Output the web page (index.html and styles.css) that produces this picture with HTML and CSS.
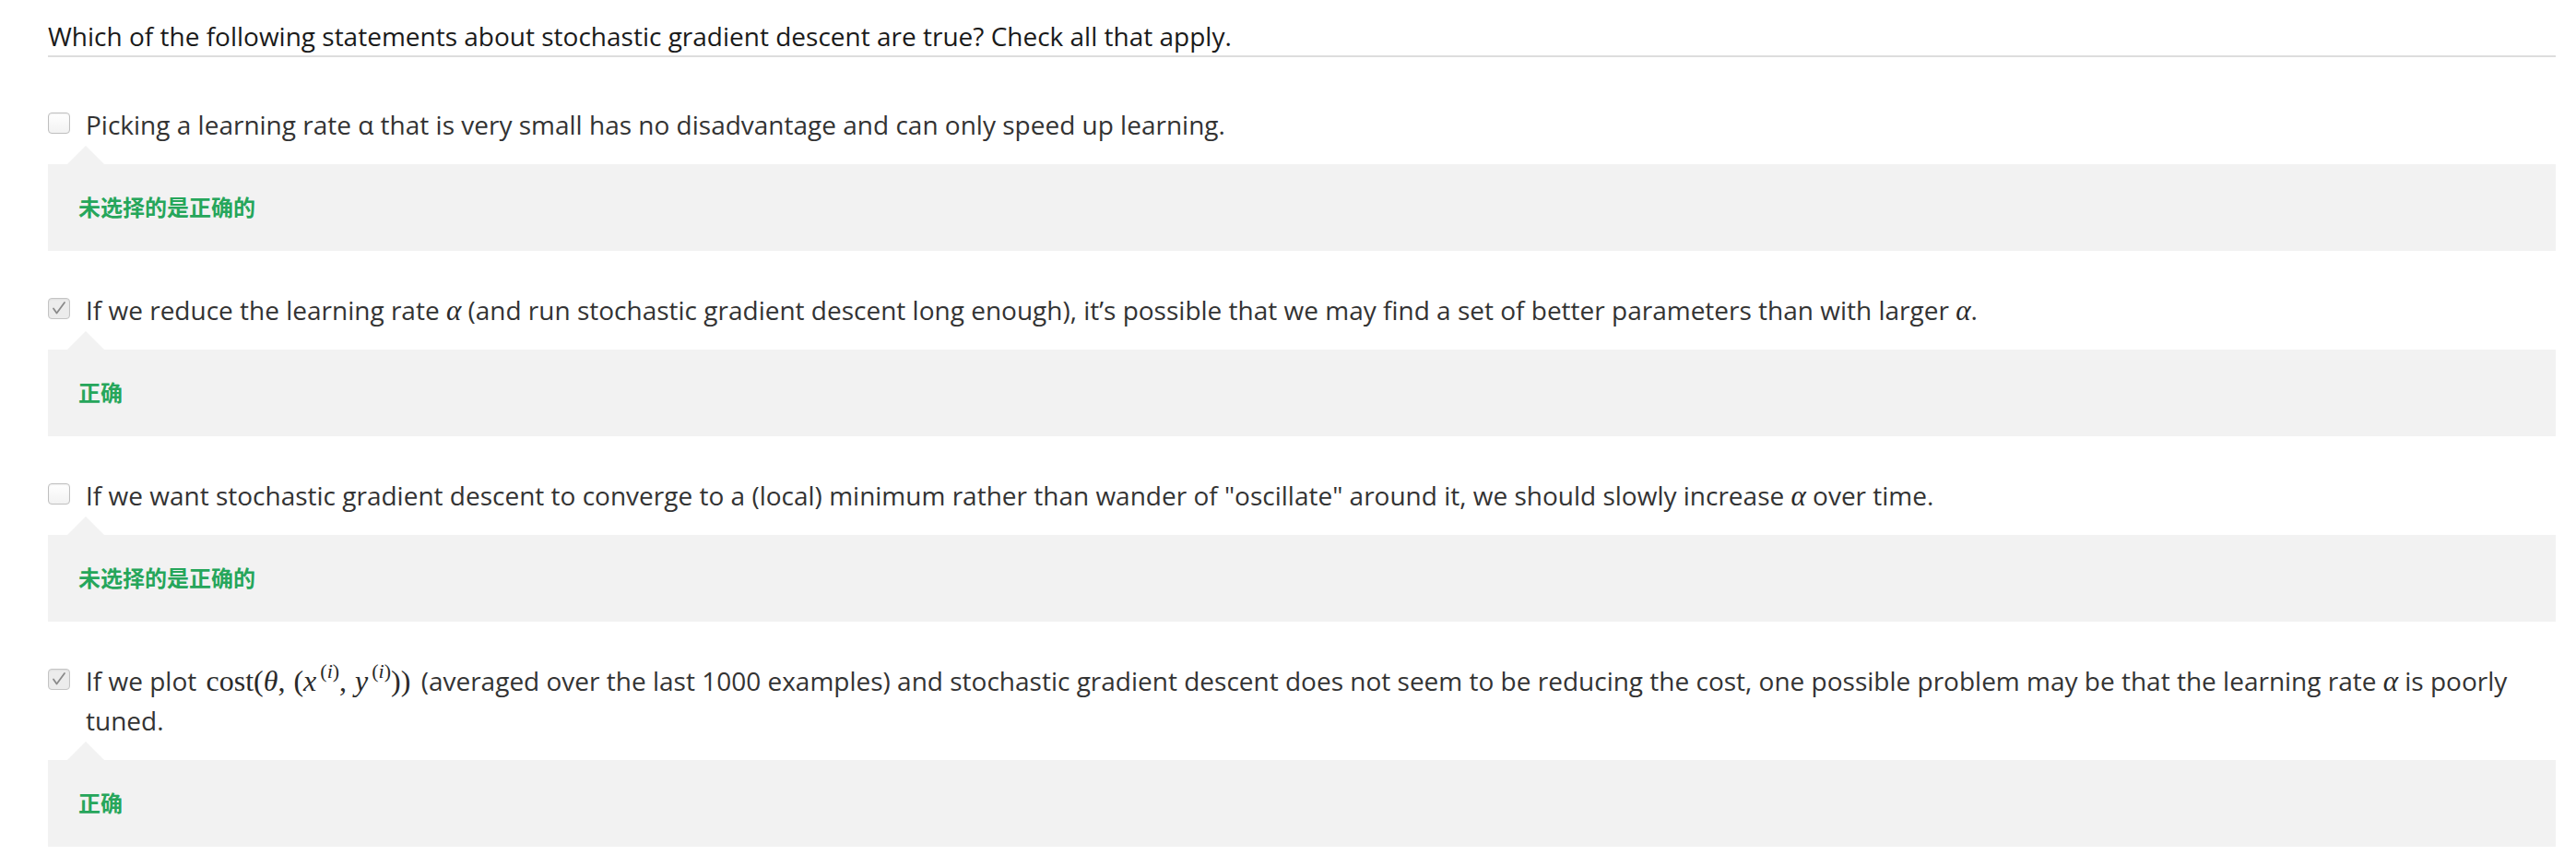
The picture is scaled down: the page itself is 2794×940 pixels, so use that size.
FILE: index.html
```html
<!DOCTYPE html>
<html lang="en">
<head>
<meta charset="utf-8">
<title>Quiz</title>
<link rel="stylesheet" href="styles.css">
</head>
<body>
<div class="quiz">
  <div class="question">Which of the following statements about stochastic gradient descent are true? Check all that apply.</div>
  <div class="options">
    <div class="option">
      <div class="choice">
        <span class="box"></span>
        <div class="text">Picking a learning rate α that is very small has no disadvantage and can only speed up learning.</div>
      </div>
      <div class="feedback"><span class="verdict">未选择的是正确的</span></div>
    </div>
    <div class="option">
      <div class="choice">
        <span class="box checked"><svg viewBox="0 0 24 23" width="24" height="23"><path d="M6 11.5 L9.5 16.5 L18 5" fill="none" stroke="#8a8a8a" stroke-width="1.8" stroke-linecap="round" stroke-linejoin="round"/></svg></span>
        <div class="text">If we reduce the learning rate <span class="math"><i>α</i></span> (and run stochastic gradient descent long enough), it’s possible that we may find a set of better parameters than with larger <span class="math"><i>α</i></span>.</div>
      </div>
      <div class="feedback"><span class="verdict">正确</span></div>
    </div>
    <div class="option">
      <div class="choice">
        <span class="box"></span>
        <div class="text">If we want stochastic gradient descent to converge to a (local) minimum rather than wander of "oscillate" around it, we should slowly increase <span class="math"><i>α</i></span> over time.</div>
      </div>
      <div class="feedback"><span class="verdict">未选择的是正确的</span></div>
    </div>
    <div class="option">
      <div class="choice">
        <span class="box checked"><svg viewBox="0 0 24 23" width="24" height="23"><path d="M6 11.5 L9.5 16.5 L18 5" fill="none" stroke="#8a8a8a" stroke-width="1.8" stroke-linecap="round" stroke-linejoin="round"/></svg></span>
        <div class="text">If we plot <span class="math formula">cost(<i>θ</i><span class="comma">,</span>(<i>x</i><sup>(<i>i</i>)</sup><span class="comma">,</span><i>y</i><sup>(<i>i</i>)</sup>))</span> (averaged over the last 1000 examples) and stochastic gradient descent does not seem to be reducing the cost, one possible problem may be that the learning rate <span class="math"><i>α</i></span> is poorly tuned.</div>
      </div>
      <div class="feedback"><span class="verdict">正确</span></div>
    </div>
  </div>
</div>
</body>
</html>
```

FILE: styles.css
```css
html, body {
  margin: 0;
  padding: 0;
  background: #ffffff;
}

body {
  font-family: "Open Sans", "Noto Sans CJK SC", sans-serif;
  color: #333333;
}

.quiz {
  padding: 0 22px 0 52px;
}

.question {
  padding-top: 18px;
  font-size: 28px;
  line-height: 42px;
  color: #1a1a1a;
  border-bottom: 2px solid #dddddd;
}

.options {
  display: flex;
  flex-direction: column;
  gap: 43px;
  margin-top: 52px;
}

.choice {
  display: flex;
  align-items: flex-start;
  gap: 17px;
}

.box {
  flex: none;
  width: 24px;
  height: 23px;
  margin-top: 8px;
  box-sizing: border-box;
  border: 1px solid #bfbfbf;
  border-radius: 4px;
  background: linear-gradient(#ffffff, #f2f2f2);
  box-shadow: inset 0 1px 2px rgba(0, 0, 0, 0.06);
  position: relative;
}

.box.checked {
  background: #ececec;
  border-color: #c4c4c4;
}

.box svg {
  position: absolute;
  left: -1px;
  top: -1px;
  display: block;
}

.text {
  font-size: 28px;
  line-height: 43px;
  color: #333333;
}

.math {
  font-family: "Liberation Serif", "DejaVu Serif", serif;
  font-size: 31px;
  line-height: 1;
  color: #2a2a2a;
}

.math.formula {
  font-size: 32px;
  margin: 0 4px 0 3px;
}

.math i {
  font-style: italic;
}

.math i + sup {
  margin-left: 4px;
}

.math .comma {
  margin-right: 9px;
}

.math sup {
  font-size: 22px;
  line-height: 1;
  vertical-align: 14px;
}

.feedback {
  position: relative;
  margin-top: 21px;
  height: 94px;
  box-sizing: border-box;
  padding: 0 0 3px 33px;
  background: #f2f2f2;
  display: flex;
  align-items: center;
}

.feedback::before {
  content: "";
  position: absolute;
  top: -20px;
  left: 21px;
  width: 0;
  height: 0;
  border-left: 20px solid transparent;
  border-right: 20px solid transparent;
  border-bottom: 20px solid #f2f2f2;
}

.verdict {
  font-family: "Noto Sans CJK SC", "Open Sans", sans-serif;
  font-size: 24px;
  line-height: 24px;
  font-weight: 700;
  color: #26a65b;
}
```
